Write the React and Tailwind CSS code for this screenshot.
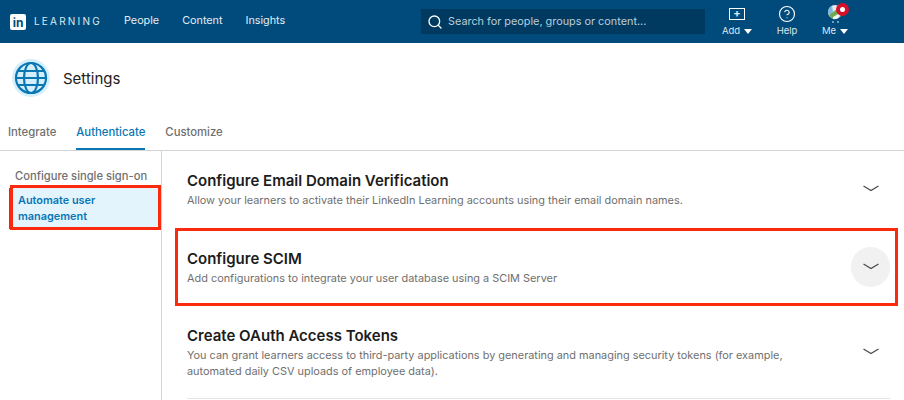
import React from 'react';
import { Search, CircleHelp } from 'lucide-react';

const Chevron = () => (
  <svg width="16" height="8" viewBox="0 0 16 8" fill="none" stroke="#4b4b4b" strokeWidth="1.3">
    <path d="M0.5 1 L8 5.5 L15.5 1" />
  </svg>
);

const Caret = () => <span className="ml-1 inline-block w-0 h-0 border-x-[4.5px] border-x-transparent border-t-[5px] border-t-white" />;

const Globe = () => (
  <svg width="38" height="38" viewBox="0 0 38 38" fill="none">
    <circle cx="19" cy="19" r="19" fill="#d5eefb" />
    <g stroke="#0a77b5" strokeWidth="2.2">
      <circle cx="19" cy="19" r="15" />
      <ellipse cx="19" cy="19" rx="7" ry="15" />
      <path d="M4 19 H34 M6 12 H32 M6 26 H32" />
    </g>
  </svg>
);

const Avatar = () => (
  <svg width="14" height="18" viewBox="0 0 14 18">
    <circle cx="7" cy="7" r="7" fill="#dfe9ee" />
    <path d="M1 10 L9 4 L14 8 A7 7 0 0 1 1 10 Z" fill="#6ea84f" />
    <path d="M0 7 A7 7 0 0 1 4 1 L5 7 L1 10 Z" fill="#7fb6dc" />
    <path d="M5 12 L12 8 L12 11 A7 7 0 0 1 5 14 Z" fill="#f1f5f6" />
    <path d="M4 17 H6 M9 17 H11" stroke="#e6eef3" strokeWidth="1" />
  </svg>
);

const Row = ({ title, children, active }) => (
  <div className="flex items-center justify-between">
    <div className="flex-1 pt-[1px]">
      <h3 className="text-[15px] leading-[20px] font-semibold text-[#1c1c1c]">{title}</h3>
      <p className="text-[10.9px] leading-[16px] text-[#6f6f6f] mt-[1px]">{children}</p>
    </div>
    <div className={`w-[39px] h-10 rounded-full flex items-center justify-center shrink-0 ${active ? 'bg-[#f1f1f1]' : ''}`}>
      <Chevron />
    </div>
  </div>
);

export default function App() {
  return (
    <div className="w-[904px] h-[400px] overflow-hidden relative bg-white font-['Inter',sans-serif]">
      {/* Header */}
      <header className="h-[43px] bg-[#004b7c] flex items-center text-white">
        <div className="flex items-center pl-[10px] w-[124px]">
          <div className="w-4 h-4 bg-white rounded-[2px] flex items-end justify-center text-[#004b7c] text-[12px] leading-[15px] font-bold">in</div>
          <span className="ml-2 text-[10px] tracking-[2.2px] text-[#dfe9f0]">LEARNING</span>
        </div>
        <nav className="w-[297px] flex gap-[23px] text-[10.8px] text-[#e4edf3]">
          <span>People</span>
          <span>Content</span>
          <span>Insights</span>
        </nav>
        <div className="w-[284px] h-[25px] bg-[#003a60] flex items-center pl-[6px]">
          <Search size={16} strokeWidth={2} className="text-white" />
          <span className="ml-[5px] text-[10.85px] text-[#b9cedc]">Search for people, groups or content...</span>
        </div>
        <div className="flex items-start text-[9.5px] text-[#dce7ee] ml-[13px]">
          <div className="w-[38px] flex flex-col items-center">
            <div className="w-[16px] h-[12px] mt-[1px] mb-[5px] border-[1.5px] border-white flex items-center justify-center text-[11px] leading-none font-bold">+</div>
            <span className="leading-[12px] whitespace-nowrap">Add<Caret /></span>
          </div>
          <div className="w-[38px] ml-[12px] flex flex-col items-center">
            <CircleHelp size={18} strokeWidth={1.5} className="text-white mb-[2px] -mt-[2px]" />
            <span className="leading-[12px]">Help</span>
          </div>
          <div className="w-[38px] ml-[10px] flex flex-col items-center relative">
            <div className="-mt-[2px] mb-[2px]"><Avatar /></div>
            <span className="absolute left-[20px] -top-[4px] w-[13px] h-[13px] rounded-full bg-[#d80f2b] flex items-center justify-center">
              <span className="w-[5px] h-[5px] rounded-full bg-white" />
            </span>
            <span className="leading-[12px] whitespace-nowrap">Me<Caret /></span>
          </div>
        </div>
      </header>

      {/* Title */}
      <div className="flex items-center pl-[12px] pb-[3px] h-[73px]">
        <Globe />
        <h1 className="ml-[13px] mt-[2px] text-[15px] text-[#222]">Settings</h1>
      </div>

      {/* Tabs */}
      <div className="flex gap-[20px] pl-[8px] h-[35px] border-b border-[#d4d4d4] text-[11.3px] font-medium text-[#707070]">
        <span className="pt-[8px]">Integrate</span>
        <span className="pt-[8px] text-[#0a77b5] border-b-2 border-[#0a77b5] h-[34px]">Authenticate</span>
        <span className="pt-[8px]">Customize</span>
      </div>

      <div className="flex h-[249px]">
        {/* Sidebar */}
        <aside className="w-[162px] shrink-0 border-r border-[#d4d4d4] pl-[9px] pt-[17px] text-[11.2px] font-medium">
          <p className="pl-[6px] leading-[16px] text-[#707070]">Configure single sign-on</p>
          <div className="mt-[4px] h-[41px] bg-[#e3f4fd] pl-[8px] py-[4px] leading-[16px] text-[10.9px] font-semibold text-[#0a77b5] border-l border-[#0a77b5]">
            Automate user<br />management
          </div>
        </aside>

        {/* Accordion */}
        <main className="flex-1 pl-[25px] pr-[14px]">
          <div className="h-[76px] pt-[18px]">
            <Row title="Configure Email Domain Verification">
              Allow your learners to activate their LinkedIn Learning accounts using their email domain names.
            </Row>
          </div>
          <div className="h-[78px] pt-[20px]">
            <Row title="Configure SCIM" active>
              Add configurations to integrate your user database using a SCIM Server
            </Row>
          </div>
          <div className="h-[94px] pt-[20px] border-b border-[#e5e5e5]">
            <Row title="Create OAuth Access Tokens">
              You can grant learners access to third-party applications by generating and managing security tokens (for example,<br />
              automated daily CSV uploads of employee data).
            </Row>
          </div>
        </main>
      </div>

      {/* Red highlight boxes */}
      <div className="absolute left-[10px] top-[185px] w-[151px] h-[45px] border-[3px] border-[#fb2a0c]" />
      <div className="absolute left-[175px] top-[228px] w-[723px] h-[78px] border-[3px] border-[#fb2a0c]" />
    </div>
  );
}
